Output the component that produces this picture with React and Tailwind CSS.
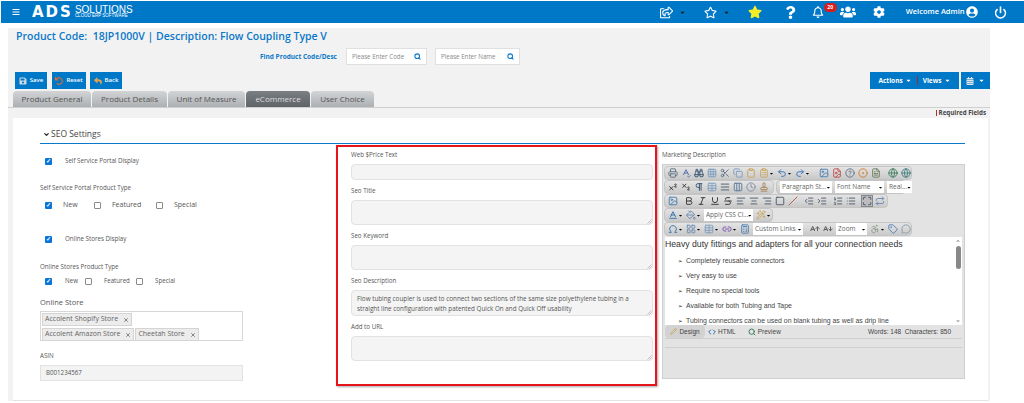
import {
  Printer, SpellCheck, Binoculars, Grid3x3, Scissors, Copy, Clipboard, ClipboardList, Undo2, Redo2, Image, FileImage,
  CircleHelp, CircleDot, FileText, Globe, Superscript, Subscript, Pilcrow, Table, AlignJustify, Clock, Stamp,
  Bold, Italic, Underline, Strikethrough, AlignLeft, AlignCenter, AlignRight, Square, Slash, Outdent, Indent,
  ListOrdered, List, Maximize, Repeat, Baseline, PaintBucket, Wand2, Omega, LayoutGrid, Columns3, Link2, Calculator,
  AArrowUp, AArrowDown, Accessibility, Tag, MessageCircle, Pencil, Code, Search, ChevronDown, X, Power,
} from "lucide-react";
import {
  FaBars, FaRegShareSquare, FaRegStar, FaStar, FaQuestion, FaRegBell, FaUsers, FaCog, FaUserCircle, FaSave,
  FaUndo, FaReply, FaCaretDown, FaCalendarAlt,
} from "react-icons/fa";

const Caret = ({ className = "text-black", size = 7 }) => <FaCaretDown size={size} className={className} />;

function Tool({ icon: Icon, color = "text-[#5c7186]", caret, active }) {
  return (
    <span className={`flex items-center ${active ? "bg-[#bcbcbc] outline outline-[#888]" : ""}`}>
      <Icon size={10} strokeWidth={2.2} className={color} />
      {caret && <Caret size={5} />}
    </span>
  );
}

function ToolRow({ children, className = "" }) {
  return (
    <div className={`flex h-[14px] items-center gap-[3px] rounded-sm border border-[#c4c4c4] bg-gradient-to-b from-[#e4e4e4] to-[#c9c9c9] px-[3px] ${className}`}>
      {children}
    </div>
  );
}

function Combo({ label, w }) {
  return (
    <span className={`flex h-[12px] shrink-0 items-center justify-between bg-white pl-[2px] pr-[1px] text-[6.5px] text-[#666] ${w}`}>
      <span className="whitespace-nowrap">{label}</span>
      <Caret size={5} />
    </span>
  );
}

function Check({ on }) {
  return on ? (
    <span className="flex h-[7px] w-[7px] shrink-0 items-center justify-center rounded-[1px] bg-[#0a75d8] text-[6px] leading-none font-bold text-white">✓</span>
  ) : (
    <span className="h-[7px] w-[7px] shrink-0 rounded-[1px] border border-[#8a8a8a] bg-white" />
  );
}

function StoreTag({ label }) {
  return (
    <span className="flex h-[13px] items-center gap-[5px] border border-[#d4d4d4] bg-[#ececec] px-[2px] text-[7px] text-[#666]">
      {label}
      <X size={6} strokeWidth={3} className="text-[#666]" />
    </span>
  );
}

function Field({ label, h, top, value }) {
  return (
    <div className={top}>
      <div className="h-[9px] text-[6.2px] leading-[9px] text-[#555]">{label}</div>
      {h ? (
        <div className="relative mt-[5px]">
          <textarea
            readOnly
            value={value || ""}
            className={`block w-full resize-none overflow-hidden rounded-sm border border-[#e2e2e2] bg-[#f4f4f4] py-[3px] pr-[2px] pl-[5px] text-[6.3px] leading-[9.5px] text-[#555] outline-none ${h}`}
          />
          {/* small resize grip */}
          <svg viewBox="0 0 5 5" className="absolute right-[1px] bottom-[1px] h-[5px] w-[5px] text-[#999]">
            <path d="M0.5 4.5 L4.5 0.5 M2.5 4.5 L4.5 2.5" stroke="currentColor" strokeWidth="0.6" />
          </svg>
        </div>
      ) : (
        <input readOnly className="mt-[5px] block h-[16px] w-full rounded-sm border border-[#e2e2e2] bg-[#f4f4f4]" />
      )}
    </div>
  );
}

function FindInput({ placeholder, w }) {
  return (
    <div className={`flex h-[17px] items-center border border-[#e0e0e0] bg-white px-[5px] ${w}`}>
      <input placeholder={placeholder} className="w-full min-w-0 bg-transparent text-[6.2px] outline-none placeholder:text-[#888]" />
      <Search size={7} strokeWidth={3.5} className="shrink-0 text-[#0b78c9]" />
    </div>
  );
}

function ActionBtn({ icon: Icon, label, w, iconColor }) {
  return (
    <button className={`flex h-[17px] items-center justify-center gap-[3px] bg-[#0078c8] text-[6px] font-semibold text-white ${w}`}>
      <Icon size={8} className={iconColor} />
      {label}
    </button>
  );
}

const tabs = [
  ["Product General", "w-[78px]"],
  ["Product Details", "w-[75px]"],
  ["Unit of Measure", "w-[77px]"],
  ["eCommerce", "w-[64px]"],
  ["User Choice", "w-[63px]"],
];

const bullets = [
  "Completely reusable connectors",
  "Very easy to use",
  "Require no special tools",
  "Available for both Tubing and Tape",
  "Tubing connectors can be used on blank tubing as well as drip line",
];

export default function App() {
  return (
    <div className="h-[403px] w-[1024px] overflow-hidden bg-white font-['Open_Sans',sans-serif]">
      <header className="mt-[1px] ml-[1px] flex h-[22px] items-center bg-[#0078c8] text-white">
        <FaBars size={8} className="ml-[11px]" />
        <div className="ml-[12px] flex items-center">
          <span className="font-['DejaVu_Sans',sans-serif] text-[15px] leading-none font-bold tracking-[2px]">ADS</span>
          <div className="ml-[2px] flex flex-col">
            <span className="font-['Liberation_Sans',sans-serif] text-[10px] leading-[7px]">SOLUTIONS</span>
            <span className="font-['Liberation_Sans',sans-serif] text-[4.5px] leading-[5px]">CLOUD ERP SOFTWARE</span>
          </div>
        </div>
        <FaRegShareSquare size={13} className="ml-[527px]" />
        <Caret className="ml-[6px] text-[#1a1a1a]" />
        <FaRegStar size={13} className="ml-[18px]" />
        <Caret className="ml-[6px] text-[#1a1a1a]" />
        <FaStar size={14} className="ml-[18px] text-[#f5ee25]" />
        <FaQuestion size={13} className="ml-[22px]" />
        <FaRegBell size={12} className="ml-[15px]" />
        <span className="mb-[9px] flex h-[9px] w-[13px] items-center justify-center rounded-full bg-[#d81e1e] text-[5px] font-bold">20</span>
        <FaUsers size={16} className="ml-[3px]" />
        <FaCog size={12} className="ml-[17px]" />
        <span className="ml-[21px] text-[7.5px] font-semibold">Welcome Admin</span>
        <FaUserCircle size={12} className="ml-[1px]" />
        <Power size={13} strokeWidth={3} className="ml-[16px]" />
      </header>

      <main className="mt-[5px] ml-[8px] w-[982px] bg-[#f2f2f2]">
        <h1 className="pt-[1px] pl-[8px] text-[10.5px] leading-[14px] font-semibold whitespace-pre text-[#0b78c9]">
          Product Code:  18JP1000V | Description: Flow Coupling Type V
        </h1>
        <div className="mt-[5px] flex h-[17px] items-center">
          <span className="ml-[252px] text-[6.5px] font-bold text-[#0b78c9]">Find Product Code/Desc</span>
          <div className="ml-[9px]">
            <FindInput placeholder="Please Enter Code" w="w-[81px]" />
          </div>
          <div className="ml-[8px]">
            <FindInput placeholder="Please Enter Name" w="w-[85px]" />
          </div>
        </div>

        <div className="mt-[7px] flex h-[17px] items-start pl-[7px]">
          <ActionBtn icon={FaSave} label="Save" w="w-[32px]" iconColor="text-[#cfd8e3]" />
          <ActionBtn icon={FaUndo} label="Reset" w="ml-[5px] w-[34px]" iconColor="text-[#e8692a]" />
          <ActionBtn icon={FaReply} label="Back" w="ml-[4px] w-[32px]" iconColor="text-[#e8a24a]" />
          <div className="ml-auto flex h-[17px] w-[89px] items-center justify-center bg-[#0078c8] text-[6.5px] font-bold text-white">
            <span>Actions</span>
            <Caret className="ml-[2px] text-white" />
            <span className="mx-[5px] h-[9px] w-px bg-[#8a3040]" />
            <span>Views</span>
            <Caret className="ml-[2px] text-white" />
          </div>
          <div className="ml-[2px] flex h-[17px] w-[29px] items-center justify-center gap-[4px] bg-[#0078c8]">
            <FaCalendarAlt size={8} className="text-[#e4e4e4]" />
            <Caret className="text-white" />
          </div>
        </div>

        <div className="mt-[2px] flex h-[17px] border-b border-[#cfcfcf] pl-[5px]">
          {tabs.map(([label, w]) => (
            <div
              key={label}
              className={`mr-px flex items-center justify-center rounded-t-sm text-[8px] ${w} ${
                label === "eCommerce"
                  ? "bg-gradient-to-b from-[#7a7f84] to-[#5f6469] text-[#ddd]"
                  : "bg-gradient-to-b from-[#d2d4d6] to-[#adb0b3] text-[#555]"
              }`}
            >
              {label}
            </div>
          ))}
        </div>

        <div className="flex h-[10px] items-center justify-end pr-[4px] text-[6.2px] font-bold text-[#444]">
          <span className="mr-[2px] h-[6px] w-[1px] bg-[#a33]" />
          Required Fields
        </div>

        <section className="ml-[5px] h-[283px] w-[975px] border-b border-[#e3e3e3] bg-white">
          <div className="ml-[27px] flex h-[26px] w-[925px] items-center border-b border-[#0b78c9] pt-[8px]">
            <ChevronDown size={7} strokeWidth={4} className="ml-[3px] text-[#222]" />
            <span className="ml-[1px] text-[8.5px] text-[#444]">SEO Settings</span>
          </div>

          <div className="flex">
            {/* left column */}
            <div className="ml-[27px] w-[203px] text-[#555]">
              <div className="mt-[13px] flex h-[8px] items-center text-[6.2px]">
                <span className="ml-[5px]"><Check on /></span>
                <span className="ml-[13px]">Self Service Portal Display</span>
              </div>
              <div className="mt-[18px] h-[9px] text-[6.2px] leading-[9px]">Self Service Portal Product Type</div>
              <div className="mt-[9px] flex h-[8px] items-center text-[7px]">
                <span className="ml-[5px]"><Check on /></span>
                <span className="ml-[11px] w-[31px]">New</span>
                <Check />
                <span className="ml-[11px] w-[44px]">Featured</span>
                <Check />
                <span className="ml-[11px]">Special</span>
              </div>
              <div className="mt-[26px] flex h-[8px] items-center text-[6.2px]">
                <span className="ml-[5px]"><Check on /></span>
                <span className="ml-[13px]">Online Stores Display</span>
              </div>
              <div className="mt-[19px] h-[9px] text-[6.2px] leading-[9px]">Online Stores Product Type</div>
              <div className="mt-[6px] flex h-[8px] items-center text-[6.2px]">
                <span className="ml-[5px]"><Check on /></span>
                <span className="ml-[13px] w-[20px]">New</span>
                <Check />
                <span className="ml-[12px] w-[32px]">Featured</span>
                <Check />
                <span className="ml-[12px]">Special</span>
              </div>
              <div className="mt-[12px] h-[11px] text-[7.5px] leading-[11px]">Online Store</div>
              <div className="mt-[3px] flex h-[30px] flex-wrap content-start gap-[1px] border border-[#d8d8d8] p-[1px]">
                <StoreTag label="Accolent Shopify Store" />
                <div className="w-full" />
                <StoreTag label="Accolent Amazon Store" />
                <StoreTag label="Cheetah Store" />
              </div>
              <div className="mt-[10px] h-[9px] text-[6.2px] leading-[9px]">ASIN</div>
              <div className="mt-[5px] flex h-[16px] items-center border border-[#e2e2e2] bg-[#f3f3f3] px-[5px] text-[6.2px]">
                B001234567
              </div>
            </div>

            {/* middle column, outlined in red */}
            <div className="mt-[1px] ml-[93px] h-[241px] w-[321px] border-2 border-[#e8141c] pt-[3px] pr-[2px] pl-[13px] shadow-[1px_1px_2px_rgba(0,0,0,0.35)]">
              <Field label="Web $Price Text" />
              <Field label="Seo Title" h="h-[25px]" top="mt-[6px]" />
              <Field label="Seo Keyword" h="h-[25px]" top="mt-[6px]" />
              <Field
                label="Seo Description"
                h="h-[26px]"
                top="mt-[6px]"
                value="Flow tubing coupler is used to connect two sections of the same size polyethylene tubing in a straight line configuration with patented Quick On and Quick Off usability"
              />
              <Field label="Add to URL" h="h-[25px]" top="mt-[6px]" />
            </div>

            {/* right column */}
            <div className="ml-[5px] w-[303px]">
              <div className="mt-[6px] h-[9px] text-[6.2px] leading-[9px] text-[#555]">Marketing Description</div>
              <div className="mt-[5px] h-[215px] border border-[#cfcfcf] bg-[#e3e3e3]">
                <div className="flex flex-col items-start px-[1px] pt-[1px]">
                  <ToolRow className="w-[248px]">
                    <Tool icon={Printer} />
                    <Tool icon={SpellCheck} color="text-[#4a6fa5]" />
                    <Tool icon={Binoculars} color="text-[#34506e]" />
                    <Tool icon={Grid3x3} color="text-[#7d9cc0]" />
                    <Tool icon={Scissors} />
                    <Tool icon={Copy} color="text-[#7d9cc0]" />
                    <Tool icon={Clipboard} color="text-[#c9a45a]" />
                    <Tool icon={ClipboardList} color="text-[#c9a45a]" caret />
                    <Tool icon={Undo2} color="text-[#3a74b5]" caret />
                    <Tool icon={Redo2} color="text-[#3a74b5]" caret />
                    <span className="mr-[3px] h-[12px] w-px bg-[#888]" />
                    <Tool icon={Image} color="text-[#4a7fb5]" />
                    <Tool icon={FileImage} color="text-[#c0504d]" />
                    <Tool icon={CircleHelp} color="text-[#5f6f80]" />
                    <Tool icon={CircleDot} color="text-[#d87a2a]" />
                    <Tool icon={FileText} color="text-[#6a7a5a]" />
                    <span className="ml-[1px]" />
                    <Tool icon={Globe} color="text-[#3f7f5f]" />
                    <Tool icon={Globe} color="text-[#3f7f7f]" />
                  </ToolRow>
                  <div className="flex gap-[2px]">
                    <ToolRow className="w-[110px]">
                      <Tool icon={Superscript} color="text-[#333]" />
                      <Tool icon={Subscript} color="text-[#333]" />
                      <Tool icon={Pilcrow} color="text-[#34506e]" />
                      <Tool icon={Table} color="text-[#7d9cc0]" />
                      <Tool icon={AlignJustify} color="text-[#4a5a6a]" />
                      <Tool icon={Columns3} color="text-[#5a7a9a]" />
                      <Tool icon={Clock} color="text-[#7d8d9d]" />
                      <Tool icon={Stamp} color="text-[#a5845a]" />
                    </ToolRow>
                    <ToolRow className="w-[130px] gap-[1px] px-0">
                      <Combo label="Paragraph St..." w="w-[52px]" />
                      <Combo label="Font Name" w="w-[49px]" />
                      <Combo label="Real..." w="w-[25px]" />
                    </ToolRow>
                  </div>
                  <ToolRow className="w-[224px]">
                    <Tool icon={Image} color="text-[#4a7fb5]" />
                    <span />
                    <Tool icon={Bold} color="text-[#333]" />
                    <Tool icon={Italic} color="text-[#333]" />
                    <Tool icon={Underline} color="text-[#333]" />
                    <Tool icon={Strikethrough} color="text-[#333]" />
                    <Tool icon={AlignLeft} color="text-[#4a5a6a]" />
                    <Tool icon={AlignCenter} color="text-[#4a5a6a]" />
                    <Tool icon={AlignRight} color="text-[#4a5a6a]" />
                    <Tool icon={Square} color="text-[#4a5a6a]" />
                    <Tool icon={Slash} color="text-[#c0504d]" />
                    <span />
                    <Tool icon={Outdent} color="text-[#4a5a6a]" />
                    <Tool icon={Indent} color="text-[#4a5a6a]" />
                    <span />
                    <Tool icon={ListOrdered} color="text-[#4a5a6a]" />
                    <Tool icon={List} color="text-[#4a5a6a]" />
                    <span />
                    <Tool icon={Maximize} color="text-[#34506e]" active />
                    <Tool icon={Repeat} color="text-[#6a8ab0]" />
                  </ToolRow>
                  <ToolRow className="w-[109px]">
                    <Tool icon={Baseline} color="text-[#2f6db0]" caret />
                    <Tool icon={PaintBucket} color="text-[#6a8ab0]" caret />
                    <Combo label="Apply CSS Cl..." w="w-[49px]" />
                    <Tool icon={Wand2} color="text-[#c9a45a]" caret />
                  </ToolRow>
                  <ToolRow className="w-[248px]">
                    <Tool icon={Omega} color="text-[#2f6db0]" caret />
                    <Tool icon={LayoutGrid} color="text-[#6a8ab0]" caret />
                    <Tool icon={Table} color="text-[#7d9cc0]" caret />
                    <Tool icon={Link2} color="text-[#7a4fb0]" caret />
                    <Tool icon={Calculator} color="text-[#4a7fb5]" />
                    <Combo label="Custom Links" w="w-[50px]" />
                    <span className="ml-[1px]" />
                    <Tool icon={AArrowUp} color="text-[#555]" />
                    <Tool icon={AArrowDown} color="text-[#555]" />
                    <Combo label="Zoom" w="w-[31px]" />
                    <Tool icon={Accessibility} color="text-[#8a9a8a]" caret />
                    <Tool icon={Tag} color="text-[#4a7fb5]" />
                    <Tool icon={MessageCircle} color="text-[#8a9aaa]" />
                  </ToolRow>
                </div>

                <div className="mx-[2px] mt-[1px] flex h-[88px] overflow-hidden bg-white font-['Liberation_Sans',sans-serif]">
                  <div className="min-w-0 flex-1">
                    <p className="pt-[1px] text-[8.7px] leading-[12px] text-[#333]">Heavy duty fittings and adapters for all your connection needs</p>
                    <ul className="mt-[4px] ml-[13px]">
                      {bullets.map((b) => (
                        <li key={b} className="flex h-[15px] items-center text-[6.9px] whitespace-nowrap text-[#444]">
                          <span className="w-[8px] shrink-0 font-['DejaVu_Sans',sans-serif] text-[5.5px] text-[#222]">➢</span>
                          {b}
                        </li>
                      ))}
                    </ul>
                  </div>
                  <div className="flex w-[8px] shrink-0 flex-col items-center">
                    <FaCaretDown size={6} className="mt-[1px] rotate-180 text-[#aaa]" />
                    <div className="mt-[2px] h-[23px] w-[5px] rounded-full bg-[#888]" />
                    <FaCaretDown size={6} className="mt-auto mb-[1px] text-[#aaa]" />
                  </div>
                </div>

                <div className="mx-[2px] flex h-[14px] items-center border-b border-[#cfcfcf] font-['Liberation_Sans',sans-serif] text-[6.5px] text-[#444]">
                  <span className="flex h-[13px] w-[40px] items-center justify-center gap-[2px] rounded-sm bg-[#d2d2d2]">
                    <Pencil size={7} className="text-[#c9962a]" />
                    Design
                  </span>
                  <span className="ml-[3px] flex items-center gap-[2px]">
                    <Code size={8} strokeWidth={3} className="text-[#2f6db0]" />
                    HTML
                  </span>
                  <span className="ml-[12px] flex items-center gap-[2px]">
                    <Search size={8} strokeWidth={3} className="text-[#3f7f5f]" />
                    Preview
                  </span>
                  <span className="mr-[11px] ml-auto">Words: 148&nbsp;&nbsp;Characters: 850</span>
                </div>
                <div className="mx-[2px] mt-[8px] border-t border-[#cfcfcf]" />
              </div>
            </div>
          </div>
        </section>
      </main>
    </div>
  );
}
